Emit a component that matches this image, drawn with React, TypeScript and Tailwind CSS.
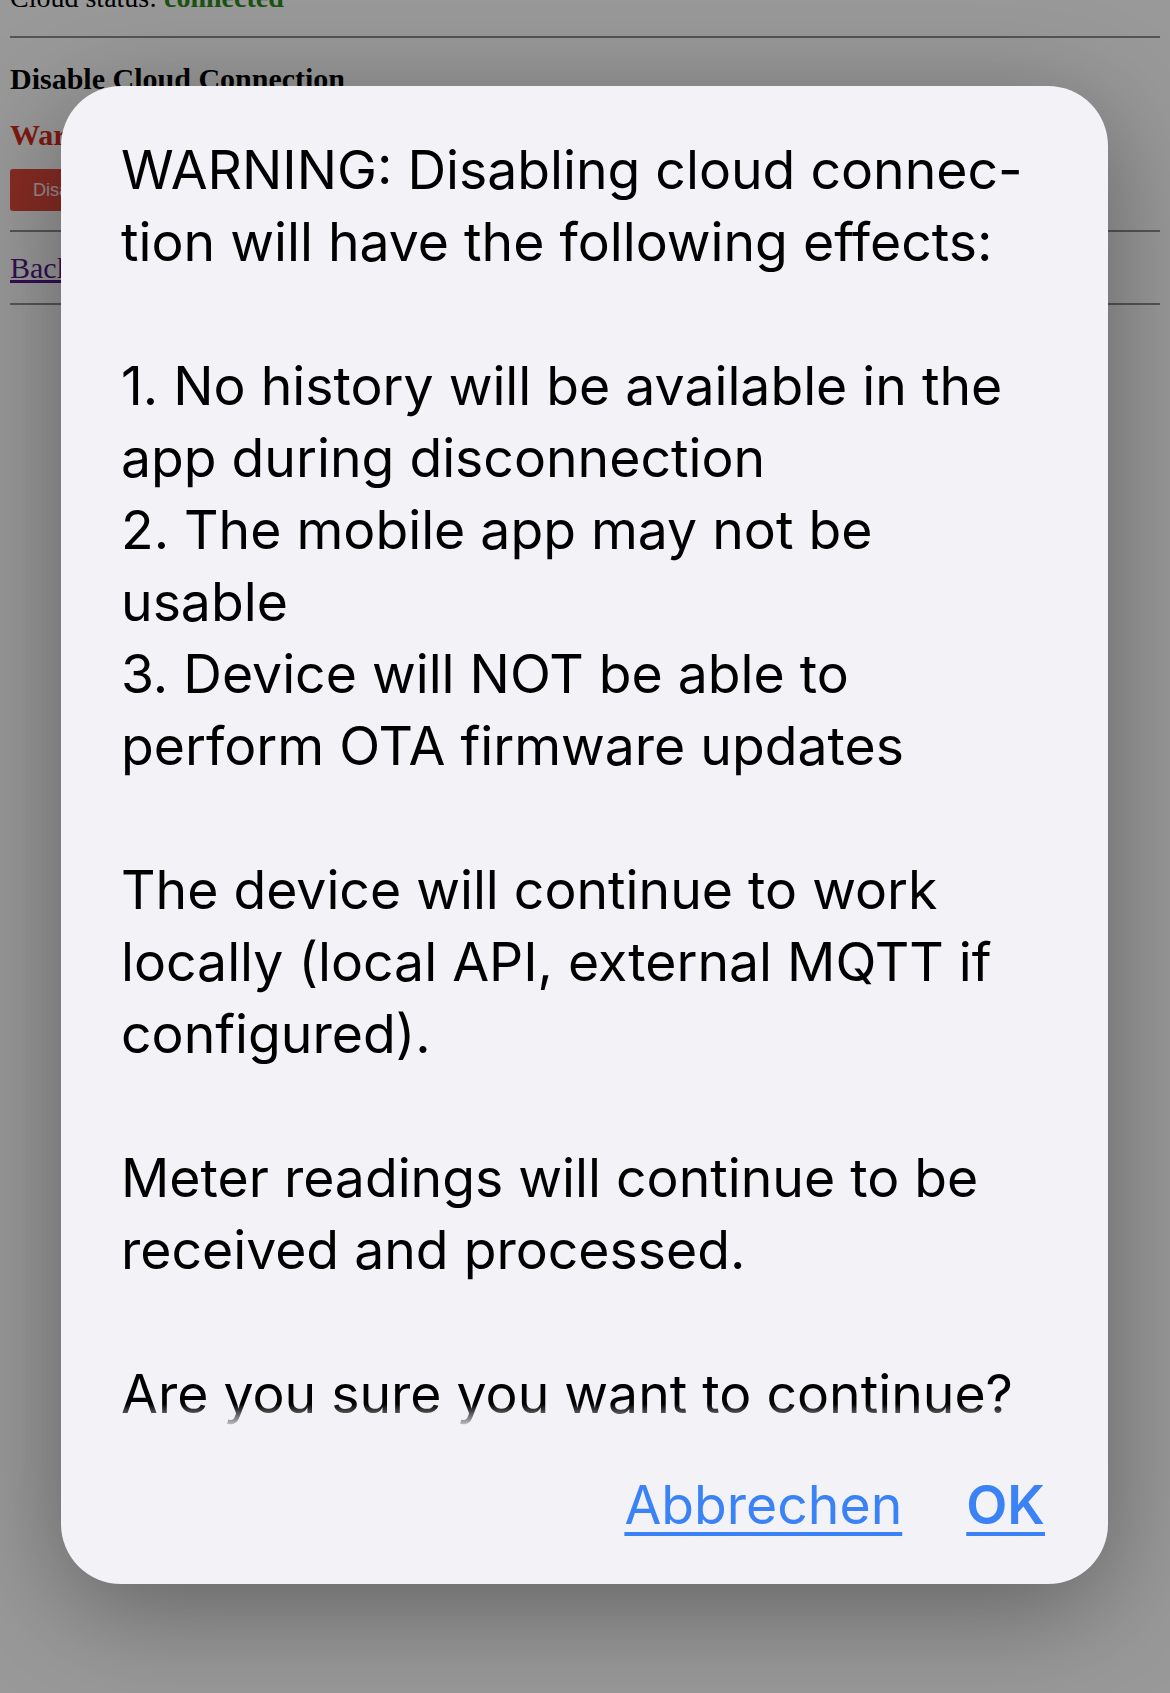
import React from "react";

const lines: string[] = [
  "WARNING: Disabling cloud connec-",
  "tion will have the following effects:",
  "",
  "1. No history will be available in the",
  "app during disconnection",
  "2. The mobile app may not be",
  "usable",
  "3. Device will NOT be able to",
  "perform OTA firmware updates",
  "",
  "The device will continue to work",
  "locally (local API, external MQTT if",
  "configured).",
  "",
  "Meter readings will continue to be",
  "received and processed.",
  "",
  "Are you sure you want to continue?",
];

function BackgroundPage() {
  return (
    <div
      className="-mt-[20px] px-[10px] text-black"
      style={{ fontFamily: '"Liberation Serif", "Times New Roman", serif' }}
    >
      <p className="h-[36px] text-[28px] leading-[36px]">
        Cloud status: <b className="text-[#2e8b1e]">connected</b>
      </p>

      <div className="mt-[20px] border-t-2 border-[#8e8e8e]" />

      <h3 className="mt-[23px] text-[30px] font-bold leading-[36px]">
        Disable Cloud Connection
      </h3>

      <p className="mt-[20px] text-[30px] font-bold leading-[36px] text-[#d42a1c]">
        Warning: disabling the cloud connection limits some features
      </p>

      <button
        className="mt-[16px] flex h-[42px] w-[320px] items-center rounded-[3px] bg-[#e04a3c] pl-[23px] text-[18px] text-white/90"
        style={{ fontFamily: '"Liberation Sans", Arial, sans-serif' }}
      >
        Disable Cloud Connection
      </button>

      <div className="mt-[19px] border-t-2 border-[#8e8e8e]" />

      <a className="mt-[18px] block text-[30px] leading-[36px] text-[#551a8b] underline" href="#">
        Back
      </a>

      <div className="mt-[17px] border-t-2 border-[#8e8e8e]" />
    </div>
  );
}

function ConfirmDialog() {
  return (
    <div
      className="absolute left-[61px] top-[86px] flex h-[1498px] w-[1047px] flex-col rounded-[60px] bg-[#f2f2f7] shadow-[0_24px_110px_rgba(0,0,0,0.36)]"
      style={{ fontFamily: 'Inter, "Noto Sans", sans-serif' }}
    >
      <div className="relative px-[60px] pt-[48px] text-[53.5px] leading-[72px] text-black">
        {lines.map((line, i) => (
          <div key={i} className="h-[72px] whitespace-nowrap">
            {line}
          </div>
        ))}
        <div className="absolute bottom-0 left-0 right-0 h-[26px] bg-gradient-to-b from-[#f2f2f7]/0 to-[#f2f2f7]" />
      </div>

      <div className="mt-[39px] flex h-[72px] items-center justify-end gap-[64px] pr-[63px] text-[53.5px] leading-[72px] text-[#3a82f6]">
        <button className="underline decoration-[4px] underline-offset-[8px]">
          Abbrechen
        </button>
        <button className="font-semibold underline decoration-[4px] underline-offset-[8px]">
          OK
        </button>
      </div>
    </div>
  );
}

export default function App() {
  return (
    <div className="relative h-[1693px] w-full overflow-hidden bg-white">
      <BackgroundPage />

      {/* dim overlay */}
      <div className="absolute inset-0 bg-black/40" />

      <ConfirmDialog />
    </div>
  );
}
